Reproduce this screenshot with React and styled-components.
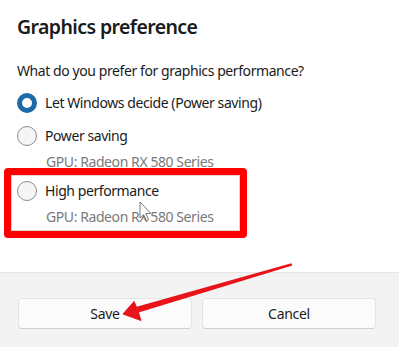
import React from 'react'
import styled, { createGlobalStyle } from 'styled-components'

const GlobalStyle = createGlobalStyle`
  html, body {
    margin: 0;
    padding: 0;
    background: #ffffff;
  }
  body {
    font-family: "Noto Sans", "Open Sans", Arial, sans-serif;
    color: #1b1b1b;
  }
`;

const Dialog = styled.div`
  position: relative;
  width: 399px;
  height: 347px;
  display: flex;
  flex-direction: column;
  background: #ffffff;
  overflow: hidden;
`;

const Body = styled.div`
  flex: 1;
  padding: 13px 17px 0 17px;
`;

const Title = styled.h2`
  margin: 0;
  font-size: 19.5px;
  line-height: 28px;
  font-weight: 600;
  letter-spacing: -0.6px;
  color: #1b1b1b;
`;

const Question = styled.p`
  margin: 20px 0 0 0;
  font-size: 14px;
  line-height: 20px;
  letter-spacing: -0.42px;
  color: #1b1b1b;
`;

const Options = styled.div`
  margin-top: 12px;
  display: flex;
  flex-direction: column;
`;

const Option = styled.div`
  display: flex;
  flex-direction: column;
  margin-top: ${({ $first }) => ($first ? '0' : '12.5px')};
`;

const Row = styled.label`
  display: flex;
  align-items: center;
  gap: 8px;
  height: 20px;
  font-size: 14px;
  line-height: 20px;
  letter-spacing: -0.42px;
  color: #1b1b1b;
`;

const Radio = styled.span`
  box-sizing: border-box;
  width: 20px;
  height: 20px;
  border-radius: 50%;
  flex: none;
  background: ${({ $checked }) => ($checked ? '#ffffff' : '#f5f5f5')};
  border: ${({ $checked }) => ($checked ? '5px solid #1d6aa8' : '1px solid #8c8c8c')};
`;

const Sub = styled.div`
  margin-top: 6px;
  padding-left: 29px;
  font-size: 14px;
  line-height: 20px;
  letter-spacing: -0.42px;
  color: #7a7a7a;
`;

const Highlight = styled.div`
  margin: -3.5px 0 0 -13px;
  width: 223px;
  padding: 5.5px 0 4px 6px;
  border: 7px solid #ff0000;
  border-radius: 4px;
  box-shadow: inset 0 0 0 1px #d8d8d8;
`;

const Footer = styled.div`
  height: 75px;
  box-sizing: border-box;
  border-top: 1px solid #e5e5e5;
  background: #f3f3f3;
  padding: 25px 23px 0 18px;
  display: grid;
  grid-template-columns: 174px 174px;
  grid-auto-rows: 31px;
  gap: 10px;
`;

const Button = styled.button`
  box-sizing: border-box;
  height: 31px;
  border: 1px solid #e3e3e3;
  border-bottom-color: #d0d0d0;
  border-radius: 4px;
  background: #fbfbfb;
  font-family: inherit;
  font-size: 14px;
  letter-spacing: -0.3px;
  color: #1b1b1b;
  padding: 0;
`;

const Overlay = styled.svg`
  position: absolute;
  left: 0;
  top: 0;
  pointer-events: none;
`;

const RadioOption = ({ label, gpu, checked, first }) => (
  <Option $first={first}>
    <Row>
      <Radio $checked={checked} />
      {label}
    </Row>
    {gpu && <Sub>GPU: {gpu}</Sub>}
  </Option>
)

export default function App() {
  return (
    <>
      <GlobalStyle />
      <Dialog>
        <Body>
          <Title>Graphics preference</Title>
          <Question>What do you prefer for graphics performance?</Question>
          <Options>
            <RadioOption first checked label="Let Windows decide (Power saving)" />
            <RadioOption label="Power saving" gpu="Radeon RX 580 Series" />
            <Highlight>
              <Row>
                <Radio />
                High performance
              </Row>
              <Sub>GPU: Radeon RX 580 Series</Sub>
            </Highlight>
          </Options>
        </Body>
        <Footer>
          <Button>Save</Button>
          <Button>Cancel</Button>
        </Footer>

        {/* mouse cursor */}
        <Overlay width="399" height="347" viewBox="0 0 399 347">
          <path
            d="M140 202 L140 218 L143.6 214.6 L146.4 220.6 L148.6 219.6 L145.9 213.7 L150.8 213.4 Z"
            fill="#ffffff"
            stroke="#6a6a6a"
            strokeWidth="0.9"
            strokeLinejoin="round"
          />
        </Overlay>

        {/* red annotation arrow */}
        <Overlay width="399" height="347" viewBox="0 0 399 347">
          <path
            d="M291.3 263.2 L292.4 265.6 L138.6 312.4 L136.6 306.8 Z"
            fill="#e8141a"
          />
          <path
            d="M123 314 L134 301.5 L137.5 309.5 L141 320.5 Z"
            fill="#e8141a"
            stroke="#e8141a"
            strokeWidth="1"
            strokeLinejoin="round"
          />
        </Overlay>
      </Dialog>
    </>
  )
}
